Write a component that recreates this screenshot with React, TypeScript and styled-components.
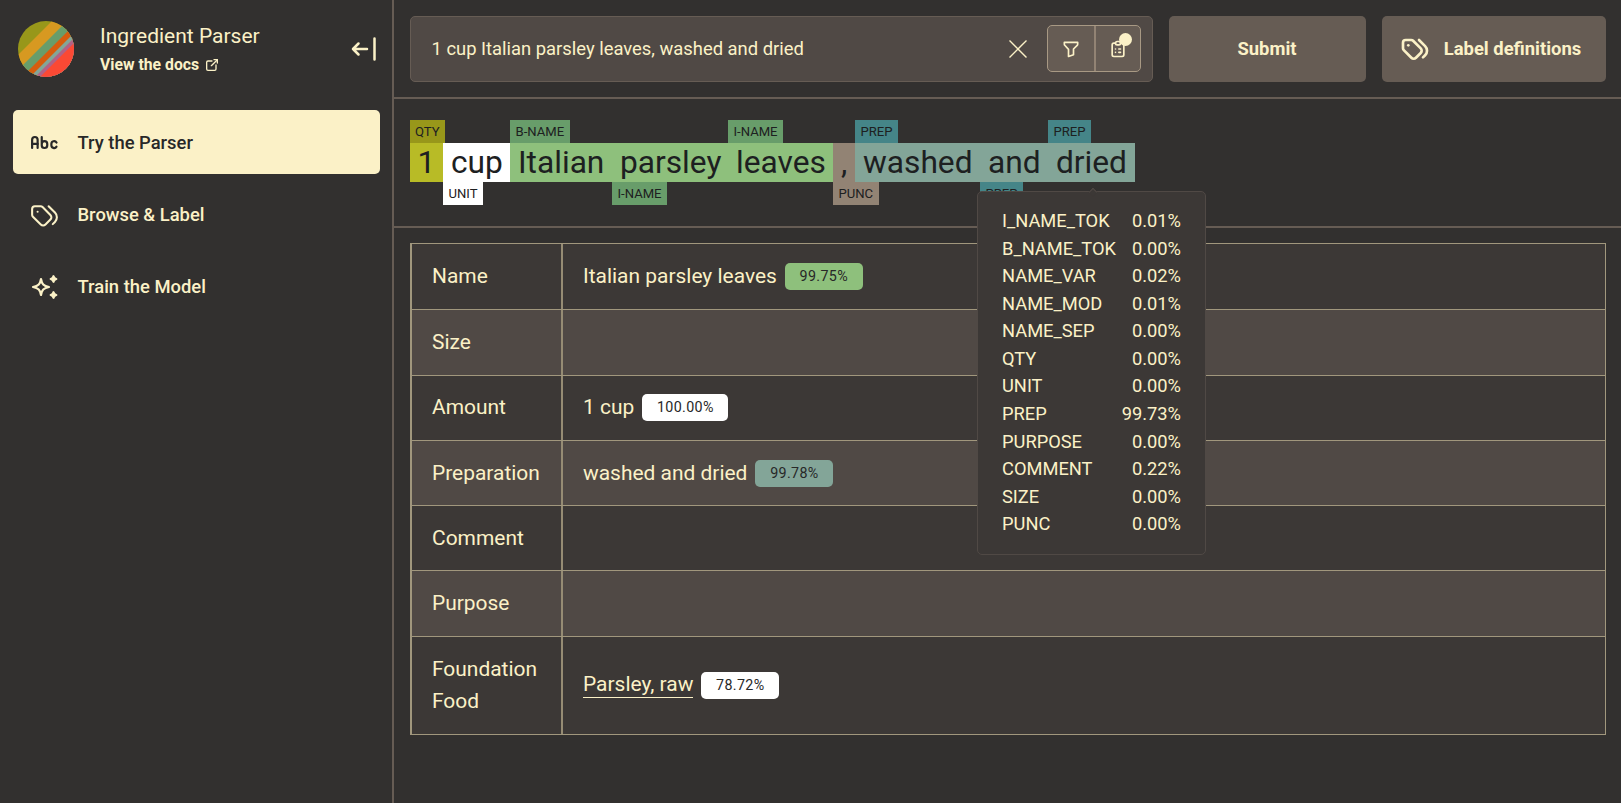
import React from "react";
import styled, { createGlobalStyle } from "styled-components";
import { TbAbc, TbTags, TbExternalLink, TbFilter, TbClipboardList } from "react-icons/tb";

const c = {
  bg: "#32302f",
  panel: "#3c3836",
  raised: "#504945",
  button: "#665c54",
  rule: "#665c54",
  grid: "#a1977d",
  cream: "#fbf1c7",
  ink: "#282828",
};

const Global = createGlobalStyle`
  * { box-sizing: border-box; }
  body { margin: 0; background: ${c.bg}; color: ${c.cream}; font-family: Roboto, "Liberation Sans", sans-serif; font-size: 18.4px; }
  button { font: inherit; color: inherit; border: 0; padding: 0; }
`;

const Page = styled.div`
  display: grid;
  grid-template-columns: 394px 1fr;
  height: 803px;
  overflow: hidden;
`;
const Sidebar = styled.aside`
  border-right: 2px solid ${c.rule};
  padding: 20px 12.5px 0 13px;
`;
const Brand = styled.header`
  display: flex;
  align-items: center;
  height: 57px;
  padding-left: 5px;
`;
const BrandText = styled.div`
  margin-left: 26px;
  padding-top: 3px;
  flex: 1;
`;
const Title = styled.div`
  font-size: 21px;
  line-height: 30px;
`;
const Docs = styled.a`
  display: flex;
  align-items: center;
  gap: 5px;
  font-size: 15.75px;
  font-weight: 700;
  line-height: 28px;
`;
const CollapseButton = styled.button`
  display: flex;
  background: none;
  margin-right: 4px;
`;
const Nav = styled.nav`
  display: flex;
  flex-direction: column;
  gap: 8px;
  margin-top: 33px;
`;
const NavItem = styled.a<{ $active?: boolean }>`
  display: flex;
  align-items: center;
  gap: 16.5px;
  height: 64px;
  padding-left: 15px;
  border-radius: 5px;
  font-weight: 500;
  background: ${(p) => (p.$active ? c.cream : "transparent")};
  color: ${(p) => (p.$active ? c.ink : c.cream)};
`;

const Main = styled.main`
  min-width: 0;
`;
const Toolbar = styled.div`
  display: flex;
  gap: 16px;
  height: 99px;
  padding: 16px 15.5px;
  border-bottom: 2px solid ${c.rule};
`;
const SearchBox = styled.div`
  display: flex;
  align-items: center;
  width: 743px;
  height: 65.5px;
  padding: 0 11px 0 21px;
  border: 1px solid ${c.button};
  border-radius: 5px;
  background: ${c.raised};
`;
const Query = styled.span`
  flex: 1;
  padding-bottom: 1px;
`;
const ClearButton = styled.button`
  display: flex;
  background: none;
  margin-right: 20px;
`;
const ToggleGroup = styled.div`
  display: flex;
  height: 47px;
  border: 1px solid #a89984;
  border-radius: 5px;
  background: ${c.button};
`;
const Toggle = styled.button`
  position: relative;
  display: flex;
  align-items: center;
  justify-content: center;
  width: 46px;
  background: none;
  & + & {
    border-left: 2px solid #928374;
  }
`;
const Dot = styled.i`
  position: absolute;
  top: 7px;
  right: 8px;
  width: 13px;
  height: 13px;
  border-radius: 50%;
  background: ${c.cream};
`;
const Action = styled.button<{ $width: number; $shift?: number }>`
  display: flex;
  align-items: center;
  justify-content: center;
  gap: 13px;
  width: ${(p) => p.$width}px;
  height: 65.5px;
  padding: 0 ${(p) => p.$shift ?? 0}px 1px 0;
  border-radius: 5px;
  background: ${c.button};
  font-weight: 700;
`;

const Sentence = styled.section`
  display: flex;
  height: 129px;
  padding: 44px 15.5px 0;
  border-bottom: 2px solid ${c.rule};
`;
const Token = styled.span<{ $bg: string; $width: number }>`
  position: relative;
  width: ${(p) => p.$width}px;
  height: 38.5px;
  padding-left: 8px;
  background: ${(p) => p.$bg};
  color: #1d2021;
  font-size: 31.7px;
  line-height: 40px;
  white-space: nowrap;
`;
const Tag = styled.span<{ $bg: string; $below?: boolean }>`
  position: absolute;
  left: 0;
  ${(p) => (p.$below ? "top: 38.5px;" : "bottom: 38.5px;")}
  height: 23.5px;
  padding: 0 5.5px;
  background: ${(p) => p.$bg};
  font-size: 13.1px;
  line-height: 23px;
`;
const Popover = styled.div`
  position: absolute;
  z-index: 2;
  top: 47.5px;
  left: -71.5px;
  width: 229px;
  height: 364.5px;
  padding: 15.5px 23.5px 0 24.5px;
  border: 1px solid #504945;
  border-radius: 5px;
  background: ${c.panel};
  color: ${c.cream};
  font-size: 18.3px;
  &::before {
    content: "";
    position: absolute;
    top: -3px;
    left: 112px;
    width: 5px;
    height: 5px;
    border: solid #504945;
    border-width: 1px 0 0 1px;
    background: ${c.panel};
    transform: rotate(45deg);
  }
`;
const Score = styled.div`
  display: flex;
  justify-content: space-between;
  line-height: 27.58px;
`;

const Results = styled.div`
  margin: 15px 15.5px 0;
  border: solid ${c.grid};
  border-width: 1px 1px 1px 2px;
`;
const Row = styled.div`
  display: grid;
  grid-template-columns: 149px 1fr;
  min-height: 65.3px;
  background: ${c.panel};
  font-size: 20.95px;
  line-height: 32.6px;
  &:nth-child(even) {
    background: ${c.raised};
  }
  & + & {
    border-top: 1px solid ${c.grid};
  }
`;
const Cell = styled.div`
  display: flex;
  align-items: center;
  gap: 8px;
  padding: 15.8px 20px 15.8px 20.5px;
  & + & {
    border-left: 2px solid #968c74;
  }
`;
const Link = styled.a`
  line-height: 25px;
  border-bottom: 1.5px solid ${c.cream};
`;
const Badge = styled.span<{ $bg: string }>`
  height: 27px;
  padding: 0 14.7px;
  border-radius: 5px;
  background: ${(p) => p.$bg};
  color: ${c.ink};
  font-size: 14.3px;
  letter-spacing: 0.35px;
  line-height: 27px;
`;

const Logo = () => (
  <svg width="56" height="56" viewBox="0 0 56 56">
    <defs>
      <clipPath id="disc">
        <circle cx="28" cy="28" r="28" />
      </clipPath>
    </defs>
    <g clipPath="url(#disc)">
      <rect width="56" height="56" fill="#98971a" />
      <path d="M-3 37 37 -3H80V80H-3z" fill="#d79921" />
      <path d="M-3 52 52 -3H80V80H-3z" fill="#689d6a" />
      <path d="M-3 63 63 -3H80V80H-3z" fill="#d65d0e" />
      <path d="M-3 71 71 -3H80V80H-3z" fill="#83a598" />
      <path d="M-3 76 76 -3H80V80H-3z" fill="#b16286" />
      <path d="M-3 81 81 -3H80V80H-3z" fill="#fb4934" />
    </g>
  </svg>
);
const CollapseIcon = () => (
  <svg width="25" height="24" viewBox="0 0 25 24" fill="none" stroke={c.cream} strokeWidth="2.5" strokeLinecap="round" strokeLinejoin="round">
    <path d="M16 12H2M7.5 6.5 2 12l5.5 5.5M23.5 1.500v21" />
  </svg>
);
const ClearIcon = () => (
  <svg width="18" height="18" viewBox="0 0 18 18" stroke={c.cream} strokeWidth="1.4">
    <path d="m.5.5 17 17m0-17-17 17" />
  </svg>
);
const SparkIcon = () => (
  <svg width="33" height="33" viewBox="0 0 33 33" fill="none" stroke={c.cream} strokeWidth="2.2" strokeLinejoin="round">
    <path d="M13 9C13.800 14 15.500 15.800 21 17C15.500 18.200 13.800 20 13 25C12.200 20 10.500 18.200 5 17C10.500 15.800 12.200 14 13 9z" />
    <path d="M25.500 6.200Q26 8.500 28.300 9Q26 9.500 25.500 11.800Q25 9.500 22.700 9Q25 8.500 25.500 6.200zM25.500 22.200Q26 24.500 28.300 25Q26 25.500 25.500 27.800Q25 25.500 22.700 25Q25 24.500 25.500 22.200z" fill={c.cream} />
  </svg>
);

const tokens = [
  { text: "1", tag: "QTY", bg: "#b8bb26", tagBg: "#98971a", width: 33.5 },
  { text: "cup", tag: "UNIT", bg: "#fff", tagBg: "#fff", width: 67 },
  { text: "Italian", tag: "B-NAME", bg: "#8ec07c", tagBg: "#689d6a", width: 102 },
  { text: "parsley", tag: "I-NAME", bg: "#8ec07c", tagBg: "#689d6a", width: 116 },
  { text: "leaves", tag: "I-NAME", bg: "#8ec07c", tagBg: "#689d6a", width: 105 },
  { text: ",", tag: "PUNC", bg: "#928374", tagBg: "#928374", width: 22 },
  { text: "washed", tag: "PREP", bg: "#83a598", tagBg: "#458588", width: 125 },
  { text: "and", tag: "PREP", bg: "#83a598", tagBg: "#458588", width: 68 },
  { text: "dried", tag: "PREP", bg: "#83a598", tagBg: "#458588", width: 86.5 },
];
const scores = [
  ["I_NAME_TOK", "0.01%"],
  ["B_NAME_TOK", "0.00%"],
  ["NAME_VAR", "0.02%"],
  ["NAME_MOD", "0.01%"],
  ["NAME_SEP", "0.00%"],
  ["QTY", "0.00%"],
  ["UNIT", "0.00%"],
  ["PREP", "99.73%"],
  ["PURPOSE", "0.00%"],
  ["COMMENT", "0.22%"],
  ["SIZE", "0.00%"],
  ["PUNC", "0.00%"],
];
const rows: { name: string; value?: string; score?: string; bg?: string; link?: boolean }[] = [
  { name: "Name", value: "Italian parsley leaves", score: "99.75%", bg: "#8ec07c" },
  { name: "Size" },
  { name: "Amount", value: "1 cup", score: "100.00%", bg: "#fff" },
  { name: "Preparation", value: "washed and dried", score: "99.78%", bg: "#83a598" },
  { name: "Comment" },
  { name: "Purpose" },
  { name: "Foundation Food", value: "Parsley, raw", score: "78.72%", bg: "#fff", link: true },
];

export default function App() {
  return (
    <>
      <Global />
      <Page>
        <Sidebar>
          <Brand>
            <Logo />
            <BrandText>
              <Title>Ingredient Parser</Title>
              <Docs>
                View the docs <TbExternalLink size={16} />
              </Docs>
            </BrandText>
            <CollapseButton aria-label="Collapse sidebar">
              <CollapseIcon />
            </CollapseButton>
          </Brand>
          <Nav>
            <NavItem $active>
              <TbAbc size={33} style={{ strokeWidth: 1.6 }} />
              Try the Parser
            </NavItem>
            <NavItem>
              <TbTags size={33} style={{ strokeWidth: 1.5 }} />
              Browse &amp; Label
            </NavItem>
            <NavItem>
              <SparkIcon />
              Train the Model
            </NavItem>
          </Nav>
        </Sidebar>
        <Main>
          <Toolbar>
            <SearchBox>
              <Query>1 cup Italian parsley leaves, washed and dried</Query>
              <ClearButton aria-label="Clear">
                <ClearIcon />
              </ClearButton>
              <ToggleGroup>
                <Toggle aria-label="Filter">
                  <TbFilter size={20} />
                </Toggle>
                <Toggle aria-label="Options">
                  <TbClipboardList size={20} />
                  <Dot />
                </Toggle>
              </ToggleGroup>
            </SearchBox>
            <Action $width={197}>Submit</Action>
            <Action $width={224} $shift={7}>
              <TbTags size={32} />
              Label definitions
            </Action>
          </Toolbar>
          <Sentence>
            {tokens.map((t, i) => (
              <Token key={i} $bg={t.bg} $width={t.width}>
                {t.text}
                <Tag $bg={t.tagBg} $below={i % 2 === 1}>
                  {t.tag}
                </Tag>
                {i === tokens.length - 1 && (
                  <Popover>
                    {scores.map(([label, value]) => (
                      <Score key={label}>
                        <span>{label}</span>
                        <span>{value}</span>
                      </Score>
                    ))}
                  </Popover>
                )}
              </Token>
            ))}
          </Sentence>
          <Results>
            {rows.map((r) => (
              <Row key={r.name}>
                <Cell>{r.name}</Cell>
                <Cell>
                  {r.value && (r.link ? <Link>{r.value}</Link> : <span>{r.value}</span>)}
                  {r.score && <Badge $bg={r.bg!}>{r.score}</Badge>}
                </Cell>
              </Row>
            ))}
          </Results>
        </Main>
      </Page>
    </>
  );
}
